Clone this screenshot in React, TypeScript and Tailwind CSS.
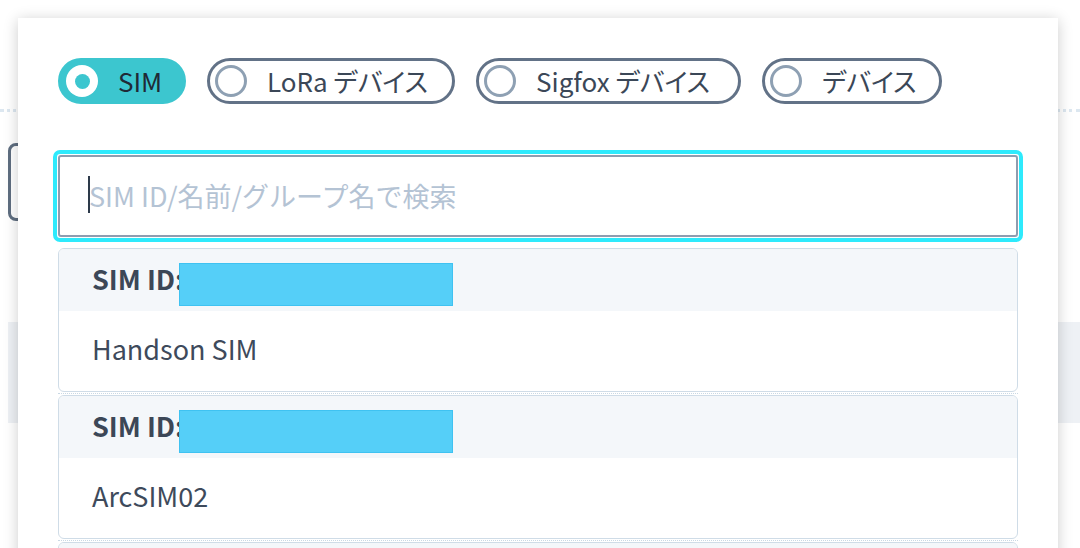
import React from 'react';

const font = "font-['Noto_Sans_CJK_JP','Noto_Sans',sans-serif]";

interface PillProps {
  label: string;
  checked?: boolean;
  width: string;
}

const Pill: React.FC<PillProps> = ({ label, checked, width }) => {
  return (
    <div
      className={`flex h-[46px] items-center rounded-full border-[3px] pl-[5px] ${width} ${
        checked ? 'border-[#3cc6cf] bg-[#3cc6cf]' : 'border-[#627287] bg-white'
      }`}
    >
      {checked ? (
        <span className="flex h-[32px] w-[32px] shrink-0 items-center justify-center rounded-full bg-white">
          <span className="h-[15px] w-[15px] rounded-full bg-[#3cc6cf]" />
        </span>
      ) : (
        <span className="h-[32px] w-[32px] shrink-0 rounded-full border-[3px] border-[#8ea0b3]" />
      )}
      <span
        className={`ml-[20px] whitespace-nowrap text-[26px] leading-none [font-feature-settings:'palt'] ${
          checked ? 'text-[#1f2a36]' : 'text-[#3b4757]'
        }`}
      >
        {label}
      </span>
    </div>
  );
};

// name === null renders the card that is cut off at the bottom edge
const SimCard: React.FC<{ name: string | null }> = ({ name }) => {
  return (
    <div className="h-[144px] shrink-0 overflow-hidden rounded-[6px] border border-[#cfdce7] bg-white">
      <div className="flex h-[62px] items-center bg-[#f4f7fa] pb-[3px] pl-[33px]">
        {name !== null && (
          <>
            <span className="text-[27px] font-bold leading-none text-[#3c4757]">SIM ID:</span>
            <span className="-ml-[5px] mt-[12px] h-[43px] w-[274px] border border-[#3fc2f1] bg-[#55cff8]" />
          </>
        )}
      </div>
      <div className="flex h-[80px] items-center pb-[5px] pl-[33px]">
        {name !== null && <span className="text-[27px] leading-none text-[#3e4a5b]">{name}</span>}
      </div>
    </div>
  );
};

const Divider: React.FC = () => (
  <div className="flex h-[3px] shrink-0 items-center">
    <div className="w-full border-t border-dotted border-[#c9d8e4]" />
  </div>
);

export default function App() {
  return (
    <div className={`relative h-[548px] w-[1080px] overflow-hidden bg-white ${font}`}>
      {/* page behind the dialog */}
      <div className="flex flex-col">
        <div className="mt-[109px] border-t-[3px] border-dotted border-[#dce7f0]" />
        <div className="ml-[8px] mt-[31px] h-[78px] w-[600px] rounded-[8px] border-[3px] border-[#5f6e80]" />
        <div className="ml-[8px] mt-[101px] h-[101px] bg-[#eef1f5]" />
      </div>

      {/* dialog */}
      <div className="absolute left-[18px] top-[18px] h-[560px] w-[1040px] bg-white px-[40px] pt-[40px] shadow-[0_2px_14px_rgba(0,0,0,0.2)]">
        <div className="flex gap-[21px]">
          <Pill label="SIM" checked width="w-[128px]" />
          <Pill label="LoRa デバイス" width="w-[248px]" />
          <Pill label="Sigfox デバイス" width="w-[265px]" />
          <Pill label="デバイス" width="w-[180px]" />
        </div>

        <div className="-mx-[5px] mt-[46px] rounded-[7px] border-4 border-[#2eeafc] p-px">
          <div className="relative flex h-[82px] items-center rounded-[3px] border-2 border-[#8e9db0] bg-white pl-[29px]">
            <span className="absolute left-[28px] top-[19px] h-[37px] w-[2px] bg-[#2d3a4a]" />
            <input
              className="w-full bg-transparent text-[27px] text-[#3e4a5b] outline-none placeholder:text-[#b4c3d4]"
              placeholder="SIM ID/名前/グループ名で検索"
            />
          </div>
        </div>

        <div className="mt-[6px] flex flex-col">
          <SimCard name="Handson SIM" />
          <Divider />
          <SimCard name="ArcSIM02" />
          <Divider />
          <SimCard name={null} />
        </div>
      </div>
    </div>
  );
}
